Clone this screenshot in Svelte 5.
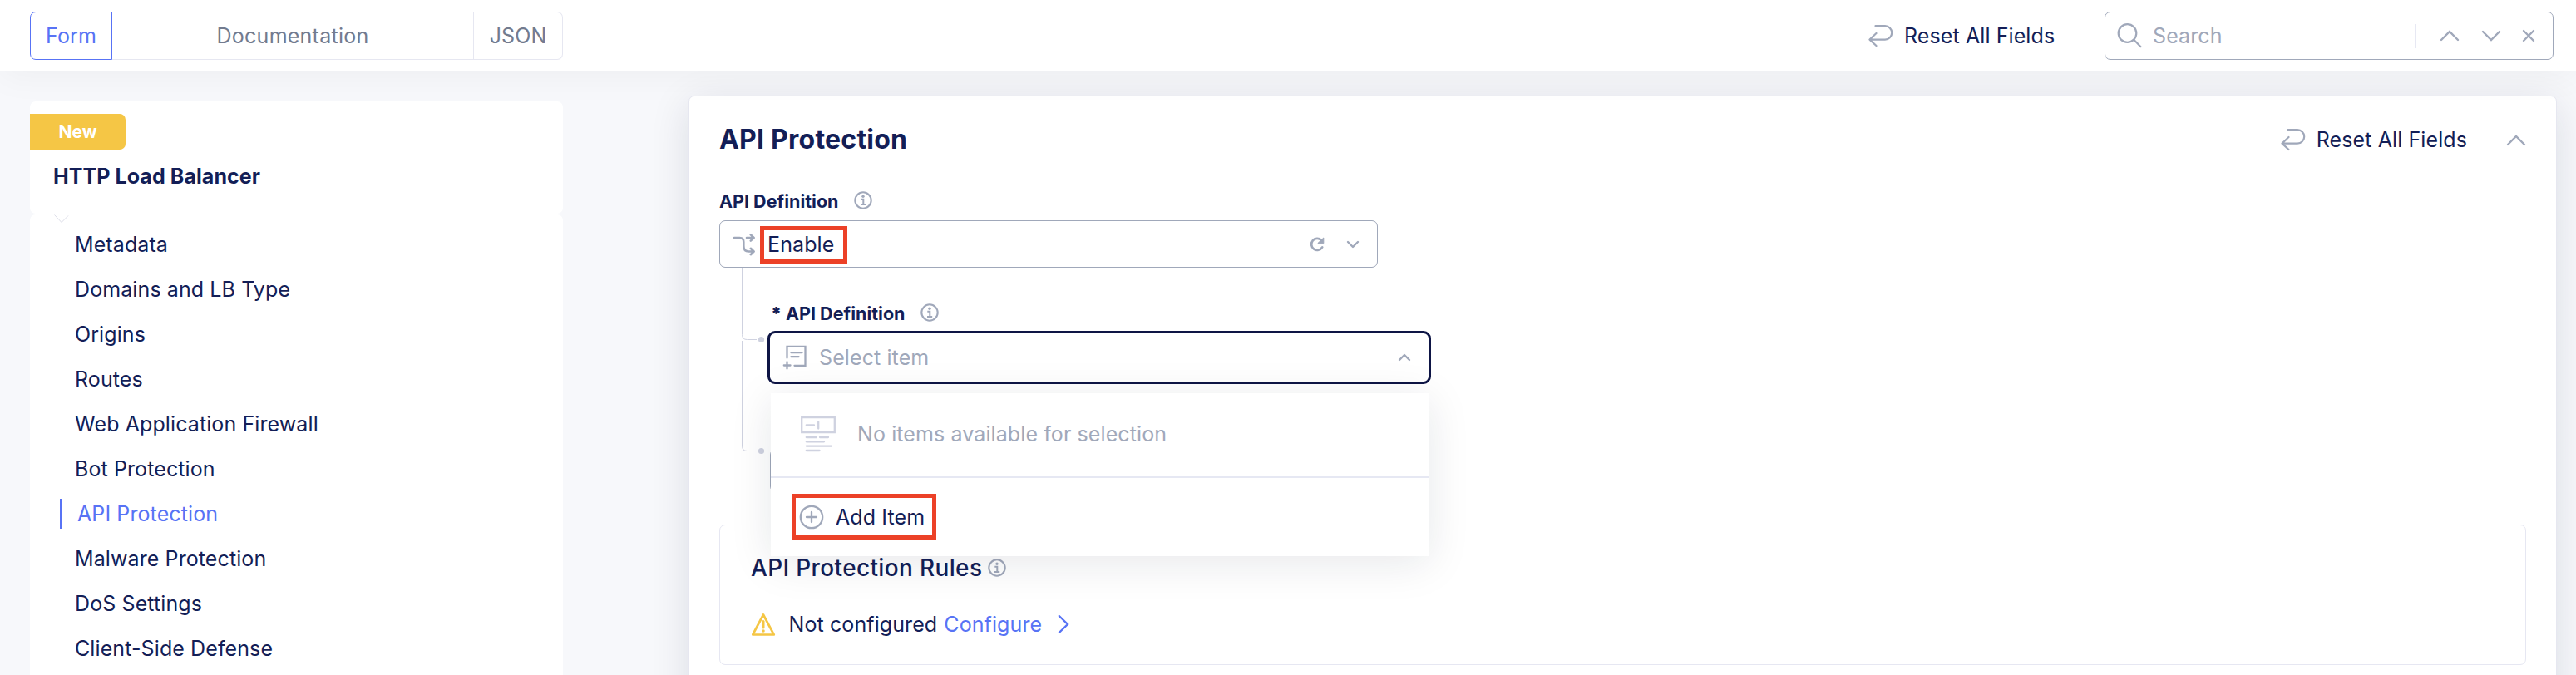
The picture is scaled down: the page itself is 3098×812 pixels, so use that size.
<script>
  const nav = [
    'Metadata',
    'Domains and LB Type',
    'Origins',
    'Routes',
    'Web Application Firewall',
    'Bot Protection',
    'API Protection',
    'Malware Protection',
    'DoS Settings',
    'Client-Side Defense'
  ];
  const active = 'API Protection';
</script>

{#snippet info()}
  <svg class="info" width="22" height="22" viewBox="0 0 22 22" fill="none" stroke="#a0a8ba">
    <circle cx="11" cy="11" r="9.7" stroke-width="2.1" />
    <circle cx="11" cy="6.3" r="1.7" fill="#a0a8ba" stroke="none" />
    <path d="M8.3 9.8h3v6M8 16h6.2" stroke-width="2" />
  </svg>
{/snippet}

{#snippet resetIcon()}
  <svg width="30" height="28" viewBox="0 0 30 28" fill="none" stroke="#a0a8ba" stroke-width="2.2" stroke-linecap="round" stroke-linejoin="round">
    <path d="M8.5 2.2H20a8.2 8.2 0 0 1 0 16.4H1.6M9.500 11L1.5 18.6L9.500 26" />
  </svg>
{/snippet}

<div class="page">
  <header>
    <div class="tabs">
      <div class="tab form">Form</div>
      <div class="tab docs">Documentation</div>
      <div class="tab json">JSON</div>
    </div>
    <div class="reset top">{@render resetIcon()}<span>Reset All Fields</span></div>
    <div class="search">
      <svg width="30" height="30" viewBox="0 0 30 30" fill="none" stroke="#a0a8ba" stroke-width="2.2" stroke-linecap="round">
        <circle cx="12.5" cy="12" r="10.8" /><path d="M20.3 19.8l8.2 8.4" />
      </svg>
      <span class="placeholder">Search</span>
      <i class="sep"></i>
      <svg class="s1" width="24" height="14" viewBox="0 0 24 14" fill="none" stroke="#a0a8ba" stroke-width="2.4" stroke-linecap="round"><path d="M2 12L12 2l10 10" /></svg>
      <svg class="s2" width="24" height="14" viewBox="0 0 24 14" fill="none" stroke="#a0a8ba" stroke-width="2.4" stroke-linecap="round"><path d="M2 2l10 10L22 2" /></svg>
      <svg class="s3" width="16" height="16" viewBox="0 0 16 16" fill="none" stroke="#a0a8ba" stroke-width="2.4" stroke-linecap="round"><path d="M2 2l12 12M14 2L2 14" /></svg>
    </div>
  </header>

  <div class="body">
    <aside>
      <div class="side-head">
        <div class="badge">New</div>
        <div class="side-title">HTTP Load Balancer</div>
      </div>
      <svg class="notch" width="641" height="12" viewBox="0 0 641 12">
        <path d="M0 .5H29M43 .5H641" stroke="#cfd1dd" fill="none" />
        <path d="M29.5 1.5L38 10.5L46 2.5" stroke="#dcdde8" fill="none" />
      </svg>
      <nav>
        {#each nav as item}
          <div class="item" class:active={item === active}><span>{item}</span></div>
        {/each}
      </nav>
    </aside>

    <main>
      <div class="title-row">
        <h1>API Protection</h1>
        <div class="reset">{@render resetIcon()}<span>Reset All Fields</span></div>
        <svg class="collapse" width="24" height="14" viewBox="0 0 24 14" fill="none" stroke="#a0a8ba" stroke-width="2.4" stroke-linecap="round"><path d="M2 12L12 2l10 10" /></svg>
      </div>

      <div class="label first">API Definition {@render info()}</div>
      <div class="select">
        <svg width="28" height="28" viewBox="0 0 28 28" fill="none" stroke="#a0a8ba" stroke-width="2.6" stroke-linecap="round" stroke-linejoin="round">
          <path d="M2 6h6.5c3.5 0 4.8 2 4.8 5v5c0 4 2 6.5 6 6.5h6M17 6h8.5M21.8 2.4L25.6 6l-3.8 3.6M21.8 18.8l3.8 3.7l-3.8 3.7" />
        </svg>
        <span class="mark enable">Enable</span>
        <svg class="refresh" width="20" height="20" viewBox="0 0 20 20" fill="none">
          <path d="M16.2 13.4A7 7 0 1 1 15 4.8" stroke="#a0a8ba" stroke-width="2.7" stroke-linecap="round" />
          <path d="M17.8 2v6.6h-7z" fill="#a0a8ba" stroke="#a0a8ba" stroke-width="1" stroke-linejoin="round" />
        </svg>
        <svg width="16" height="10" viewBox="0 0 16 10" fill="none" stroke="#a0a8ba" stroke-width="2.4" stroke-linecap="round" stroke-linejoin="round"><path d="M2 2l6 6l6-6" /></svg>
      </div>

      <div class="nested">
        <svg class="tree" width="31" height="309" viewBox="0 0 31 309" fill="none" stroke="#cfd2e0">
          <path d="M.5 0V80.500Q.5 86.500 6.500 86.500H18M.5 88V214.500Q.5 220.500 6.500 220.500H18" />
          <circle cx="23.500" cy="86.500" r="3.600" fill="#cfd2e0" stroke="none" />
          <circle cx="23.500" cy="220.500" r="3.600" fill="#cfd2e0" stroke="none" />
        </svg>
        <div class="fields">
          <div class="label second"><b>*</b>API Definition {@render info()}</div>
          <div class="focus">
            <svg width="30" height="30" viewBox="0 0 30 30" fill="none" stroke="#a0a8ba" stroke-width="2.3" stroke-linecap="round">
              <path d="M5.500 15.500V1.800H27.500V24.800H14.500M10.500 9.200H23.500M10.500 14.200H19.500M5.500 20.500V28.500M1.800 24.500H9.500" stroke-linejoin="miter" />
            </svg>
            <span class="placeholder">Select item</span>
            <svg class="up" width="16" height="10" viewBox="0 0 16 10" fill="none" stroke="#a0a8ba" stroke-width="2.4" stroke-linecap="round" stroke-linejoin="round"><path d="M2 8l6-6l6 6" /></svg>
            <div class="menu">
              <div class="empty">
                <svg width="44" height="44" viewBox="0 0 44 44" fill="none" stroke="#cfd2e0" stroke-width="2.300" stroke-linecap="round">
                  <path d="M2.200 2.200H41.800V20.200H2.200zM7.800 11.500H17M22.200 7.500V15.500M7.800 26H20M24 26H34M7.800 31.300H29M7.800 36.600H38M7.800 42H23.500" />
                </svg>
                <span>No items available for selection</span>
              </div>
              <div class="add-row">
                <div class="mark add">
                  <svg width="30" height="30" viewBox="0 0 30 30" fill="none" stroke="#a0a8ba" stroke-width="2.300" stroke-linecap="round">
                    <circle cx="15" cy="15" r="13.200" /><path d="M15 9v12M9 15h12" />
                  </svg>
                  <span>Add Item</span>
                </div>
              </div>
            </div>
          </div>
          <div class="covered"></div>
        </div>
      </div>

      <section>
        <h2>API Protection Rules {@render info()}</h2>
        <div class="status">
          <svg width="30" height="29" viewBox="0 0 30 29" fill="none" stroke="#f5c645" stroke-width="2.700" stroke-linejoin="round">
            <path d="M15 2.500L27.700 26.500H2.300z" /><path d="M15 10.500v7.500" stroke-width="3" stroke-linecap="round" /><circle cx="15" cy="22" r="1.800" fill="#f5c645" stroke="none" />
          </svg>
          <span class="nc">Not configured</span>
          <span class="cfg">Configure</span>
          <svg width="14" height="24" viewBox="0 0 14 24" fill="none" stroke="#5873f5" stroke-width="2.400" stroke-linecap="round"><path d="M1.800 2L12 12L1.800 22" /></svg>
        </div>
      </section>
    </main>
  </div>
</div>

<style>
  :global(body) { margin: 0; }
  .page, .page * { box-sizing: border-box; }
  .page {
    height: 812px;
    overflow: hidden;
    background: #f7f8fb;
    color: #131e57;
    font: 400 25px/30px Inter, sans-serif;
    letter-spacing: 0.1px;
    white-space: nowrap;
  }
  svg { display: block; flex: none; }
  header {
    position: relative;
    z-index: 2;
    height: 86px;
    padding: 14px 27px 14px 36px;
    background: #fff;
    display: flex;
    box-shadow: 0 8px 40px rgba(0, 0, 0, 0.04);
  }
  .tabs { display: flex; width: 641px; height: 58px; }
  .tab { display: flex; align-items: center; justify-content: center; border: 1px solid #e6e7f1; color: #727b8f; }
  .form { width: 99px; border-color: #5873f5; border-radius: 7px 0 0 7px; color: #5873f5; }
  .docs { flex: 1; border-left: 0; letter-spacing: 0.25px; }
  .json { width: 107px; border-left: 0; border-radius: 0 7px 7px 0; }
  .reset { display: flex; align-items: center; gap: 13px; }
  .top { margin-left: auto; width: 284px; }
  .search { width: 540px; height: 58px; border: 1px solid #a0a8ba; border-radius: 7px; display: flex; align-items: center; padding: 0 21px 0 14px; }
  .placeholder { color: #a0a8ba; flex: 1; padding-left: 13px; }
  .sep { width: 2px; height: 29px; background: #e6e8f3; margin-right: 28px; }
  .s2 { margin-left: 26px; }
  .s3 { margin-left: 25px; }

  .body { display: flex; gap: 151px; padding-left: 36px; height: 726px; }
  aside { width: 641px; margin-top: 36px; }
  .side-head { height: 135px; background: #fff; border-radius: 7px; padding-top: 15px; }
  .badge { width: 115px; height: 43px; border-radius: 0 7px 7px 0; background: #f5c645; color: #fff; font-weight: 700; font-size: 21px; letter-spacing: 0; display: flex; align-items: center; justify-content: center; }
  .side-title { margin: 17px 0 0 28px; font-weight: 700; font-size: 25px; letter-spacing: 0.07px; }
  .notch { position: relative; margin-bottom: -11px; }
  nav { background: #fff; border-radius: 7px; padding-top: 9px; height: 580px; }
  .item { height: 54px; display: flex; align-items: center; padding-left: 54px; }
  .active { color: #5873f5; padding-left: 36px; }
  .active span { border-left: 3px solid #5873f5; padding-left: 18px; line-height: 36px; }

  main { width: 2247px; margin-top: 29px; height: 900px; background: #fff; border: 1px solid #e6e7f0; border-radius: 7px; padding: 28px 36px; box-shadow: 0 10px 48px rgba(20, 25, 60, 0.12); }
  .title-row { display: flex; align-items: center; height: 48px; }
  h1 { margin: 0; font-size: 32px; line-height: 48px; font-weight: 700; letter-spacing: 0.23px; flex: 1; }
  .collapse { margin: 2px 0 0 47px; }
  .label { display: flex; align-items: center; font-weight: 700; font-size: 21.5px; letter-spacing: 0; height: 30px; }
  .label .info { margin: -3px 0 0 18px; }
  .first { margin-top: 35px; margin-bottom: 8px; }
  .select { width: 792px; height: 57px; border: 1px solid #a0a8ba; border-radius: 7px; display: flex; align-items: center; padding: 0 21px 0 15px; }
  .mark { border: 5px solid #ec4127; }
  .enable { margin: 1px 0 0 5px; width: 105px; height: 45px; line-height: 35px; padding-left: 4px; }
  .refresh { margin: 0 25px 0 auto; }
  .nested { display: flex; padding-left: 27px; }
  .fields { width: 798px; }
  .second { margin: 40px 0 6px 4px; }
  .second b { width: 18px; }
  .focus { position: relative; z-index: 1; height: 64px; border: 3px solid #0e1545; border-radius: 9px; display: flex; align-items: center; padding: 0 21px 0 15px; }
  .focus .placeholder { padding-left: 14px; }
  .menu { position: absolute; left: 1px; top: 72px; width: 792px; height: 196px; background: #fff; box-shadow: 0 8px 48px rgba(20, 30, 50, 0.1); }
  .empty { height: 102px; border-bottom: 2px solid #e6e8f3; padding: 0 0 2px 35px; display: flex; align-items: center; gap: 25px; color: #a0a8ba; }
  .add-row { padding: 19px 25px; display: flex; }
  .add { width: 174px; height: 55px; display: flex; align-items: center; padding-left: 4px; gap: 14px; }
  .covered { margin: 78px 0 0 3px; height: 52px; width: 792px; border: 1px solid #a0a8ba; border-radius: 7px; }

  section { height: 169px; border: 1px solid #e6e7f2; border-radius: 7px; padding: 36px 37px; }
  h2 { margin: 0; display: flex; align-items: center; font-size: 28px; line-height: 30px; font-weight: 500; letter-spacing: 0.35px; }
  h2 .info { margin-left: 7px; }
  .status { display: flex; align-items: center; margin-top: 38px; height: 30px; }
  .nc { margin-left: 15.5px; }
  .cfg { color: #5873f5; margin: 0 19px 0 8px; }
</style>
